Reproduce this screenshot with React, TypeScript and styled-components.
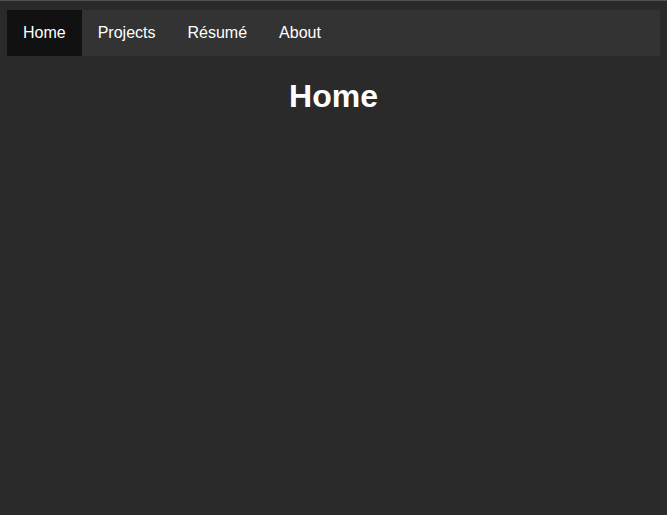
import React from "react";
import styled, { createGlobalStyle } from "styled-components";

const GlobalStyle = createGlobalStyle`
  html, body {
    margin: 0;
    padding: 0;
    background: #2a2a2a;
  }
  html {
    border-top: 1px solid #505358;
  }
  body {
    font-family: "Liberation Sans", Arial, sans-serif;
    color: #ffffff;
    min-height: 514px;
  }
`;

const Page = styled.div`
  display: flex;
  flex-direction: column;
  padding: 9px 7px 0;
`;

const NavBar = styled.nav`
  display: flex;
  background: #333333;
`;

const NavItem = styled.a<{ $active?: boolean }>`
  display: block;
  padding: 14px 16px;
  font-size: 16px;
  line-height: 18px;
  color: #ffffff;
  text-decoration: none;
  background: ${(p) => (p.$active ? "#111111" : "transparent")};
  cursor: pointer;
`;

const Title = styled.h1`
  margin: 22px 0 0;
  text-align: center;
  font-size: 32px;
  font-weight: bold;
  line-height: 37px;
  color: #ffffff;
`;

const items = ["Home", "Projects", "Résumé", "About"];

export default function App() {
  return (
    <>
      <GlobalStyle />
      <Page>
        <NavBar>
          {items.map((it, i) => (
            <NavItem key={it} $active={i === 0}>
              {it}
            </NavItem>
          ))}
        </NavBar>
        <Title>Home</Title>
      </Page>
    </>
  );
}
